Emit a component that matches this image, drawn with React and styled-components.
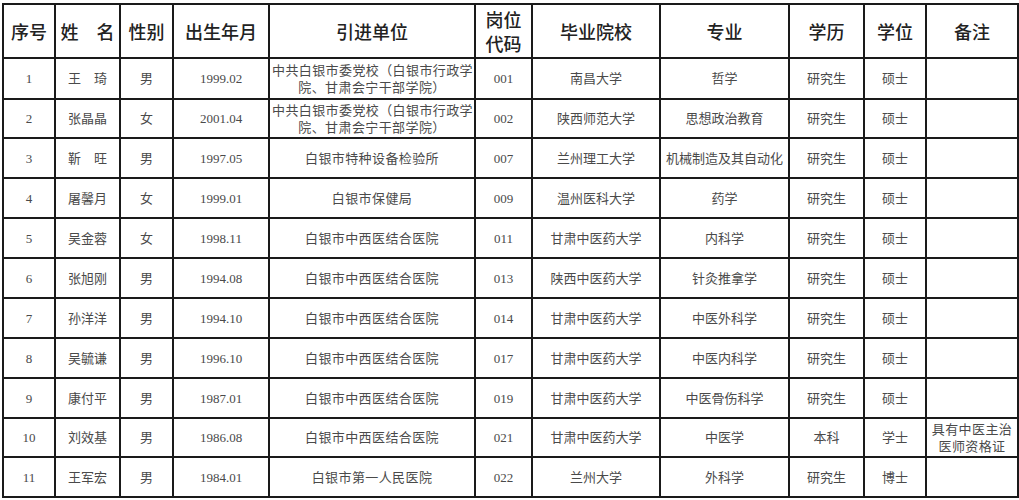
import React from 'react';
import styled, { createGlobalStyle } from 'styled-components';

const GlobalStyle = createGlobalStyle`
    html, body {
        margin: 0;
        padding: 0;
        background: #fff;
    }
`;

const Page = styled.div`
    padding: 3px 2px 0 2px;
    width: 1015px;
`;

const Table = styled.table`
    width: 1015px;
    border-collapse: collapse;
    table-layout: fixed;
    border: 2px solid #1a1a1a;
`;

const HeadCell = styled.th`
    height: 52px;
    border: 2px solid #1a1a1a;
    padding: 0;
    font-family: 'Noto Sans CJK SC', 'Noto Sans', sans-serif;
    font-size: 18px;
    font-weight: 500;
    line-height: ${(p) => (p.$stacked ? '24px' : '26px')};
    color: #222;
    text-align: center;
    vertical-align: middle;
`;

const Cell = styled.td`
    height: ${(p) => p.$h || 38}px;
    border: 2px solid #1a1a1a;
    padding: 0 2px;
    font-family: 'Liberation Serif', 'Noto Sans CJK SC', serif;
    font-size: 13px;
    line-height: 17px;
    color: #4a4a4a;
    text-align: center;
    vertical-align: middle;
    letter-spacing: ${(p) => (p.$wide ? '0.4px' : '0')};
    white-space: nowrap;
`;

const cols = [52, 65, 53, 96, 206, 57, 128, 129, 75, 62, 92];

const headers = ['序号', '姓　名', '性别', '出生年月', '引进单位', ['岗位', '代码'], '毕业院校', '专业', '学历', '学位', '备注'];

const unitA = ['中共白银市委党校（白银市行政学', '院、甘肃会宁干部学院）'];
const hosp = '白银市中西医结合医院';

const rows = [
    ['1', '王　琦', '男', '1999.02', unitA, '001', '南昌大学', '哲学', '研究生', '硕士', ''],
    ['2', '张晶晶', '女', '2001.04', unitA, '002', '陕西师范大学', '思想政治教育', '研究生', '硕士', ''],
    ['3', '靳　旺', '男', '1997.05', '白银市特种设备检验所', '007', '兰州理工大学', '机械制造及其自动化', '研究生', '硕士', ''],
    ['4', '屠馨月', '女', '1999.01', '白银市保健局', '009', '温州医科大学', '药学', '研究生', '硕士', ''],
    ['5', '吴金蓉', '女', '1998.11', hosp, '011', '甘肃中医药大学', '内科学', '研究生', '硕士', ''],
    ['6', '张旭刚', '男', '1994.08', hosp, '013', '陕西中医药大学', '针灸推拿学', '研究生', '硕士', ''],
    ['7', '孙洋洋', '男', '1994.10', hosp, '014', '甘肃中医药大学', '中医外科学', '研究生', '硕士', ''],
    ['8', '吴毓谦', '男', '1996.10', hosp, '017', '甘肃中医药大学', '中医内科学', '研究生', '硕士', ''],
    ['9', '康付平', '男', '1987.01', hosp, '019', '甘肃中医药大学', '中医骨伤科学', '研究生', '硕士', ''],
    ['10', '刘效基', '男', '1986.08', hosp, '021', '甘肃中医药大学', '中医学', '本科', '学士', ['具有中医主治', '医师资格证']],
    ['11', '王军宏', '男', '1984.01', '白银市第一人民医院', '022', '兰州大学', '外科学', '研究生', '博士', ''],
];

const heights = [39, 37, 38, 38, 38, 38, 38, 38, 38, 37, 38];

const Lines = ({ value }) =>
    Array.isArray(value)
        ? value.map((line, i) => (
              <React.Fragment key={i}>
                  {i > 0 && <br />}
                  {line}
              </React.Fragment>
          ))
        : value;

const App = () => {
    return (
        <Page>
            <GlobalStyle />
            <Table>
                <colgroup>
                    {cols.map((w, i) => (
                        <col key={i} style={{ width: w }} />
                    ))}
                </colgroup>
                <thead>
                    <tr>
                        {headers.map((h, i) => (
                            <HeadCell key={i} $stacked={Array.isArray(h)}>
                                <Lines value={h} />
                            </HeadCell>
                        ))}
                    </tr>
                </thead>
                <tbody>
                    {rows.map((row, r) => (
                        <tr key={r}>
                            {row.map((v, c) => (
                                <Cell key={c} $h={heights[r]} $wide={c === 4 || c === 10}>
                                    <Lines value={v} />
                                </Cell>
                            ))}
                        </tr>
                    ))}
                </tbody>
            </Table>
        </Page>
    );
};

export default App;
